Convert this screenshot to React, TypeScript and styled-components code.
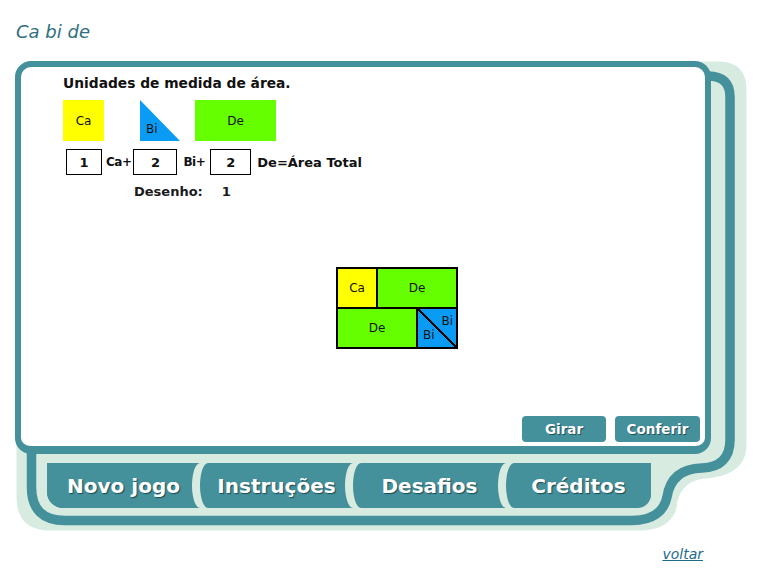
import React from "react";
import styled, { createGlobalStyle } from "styled-components";

const TEAL = "#44909b";
const MINT = "#d7ebe0";
const INK = "#111";

const Global = createGlobalStyle`
  html, body { margin: 0; padding: 0; background: #fff; }
  body { font-family: "DejaVu Sans", Verdana, sans-serif; color: ${INK}; }
`;

const Page = styled.div`
  width: 763px;
  height: 587px;
  padding-top: 21px;
  box-sizing: border-box;
`;

const Title = styled.h1`
  margin: 0 0 0 16px;
  font: italic 400 18px/21px "DejaVu Sans", Verdana, sans-serif;
  color: #2f6f7e;
`;

const Frame = styled.div`
  position: relative;
  isolation: isolate;
  margin: 19px 0 0 15px;
  width: 732px;
  height: 470px;
`;

const Backdrop = styled.svg`
  position: absolute;
  left: 0;
  top: 0;
  z-index: -1;
`;

const Panel = styled.div`
  box-sizing: border-box;
  width: 696px;
  height: 393px;
  background: #fff;
  border: 6px solid ${TEAL};
  border-bottom-width: 8px;
  border-radius: 16px;
  display: flex;
  flex-direction: column;
  align-items: flex-start;
  padding: 9px 5px 4px 42px;
`;

const Heading = styled.div`
  font: 700 13.8px/15px "DejaVu Sans", Verdana, sans-serif;
`;

const PieceRow = styled.div`
  display: flex;
  align-items: flex-start;
  margin-top: 9px;
`;

const Piece = styled.div<{ $w: number; $color: string; $gap?: number }>`
  width: ${(p) => p.$w}px;
  height: 41px;
  margin-right: ${(p) => p.$gap ?? 0}px;
  background: ${(p) => p.$color};
  display: flex;
  align-items: center;
  justify-content: center;
  font: 400 12px/14px "DejaVu Sans", sans-serif;
`;

const Triangle = styled(Piece)`
  clip-path: polygon(0 0, 0 100%, 100% 100%);
  align-items: flex-end;
  justify-content: flex-start;
  padding: 0 0 5px 6px;
  box-sizing: border-box;
`;

const EqRow = styled.div`
  display: flex;
  align-items: center;
  margin-top: 8px;
  padding-left: 3px;
`;

const NumBox = styled.div<{ $w: number }>`
  box-sizing: border-box;
  width: ${(p) => p.$w}px;
  height: 26px;
  border: 1px solid #000;
  display: flex;
  align-items: center;
  justify-content: center;
  font: 700 13px/15px "DejaVu Sans", sans-serif;
`;

const EqLabel = styled.span<{ $l: number; $r: number; $tight?: boolean }>`
  font: 700 ${(p) => (p.$tight ? 12 : 13)}px/15px "DejaVu Sans", sans-serif;
  letter-spacing: ${(p) => (p.$tight ? "-0.5px" : "0")};
  margin: 0 ${(p) => p.$r}px 0 ${(p) => p.$l}px;
`;

const DrawLine = styled.div`
  margin: 9px 0 0 71px;
  font: 700 13px/15px "DejaVu Sans", sans-serif;
  color: #1a1a1a;
`;

const DrawNum = styled.span`
  margin-left: 19px;
`;

const Figure = styled.div`
  display: grid;
  grid-template-columns: repeat(3, 40px);
  grid-template-rows: repeat(2, 40px);
  border: 1px solid #000;
  margin: 68px 0 0 273px;
`;

const Block = styled.div<{ $color: string; $span?: number }>`
  grid-column: span ${(p) => p.$span ?? 1};
  background: ${(p) => p.$color};
  border: 1px solid #000;
  display: flex;
  align-items: center;
  justify-content: center;
  font: 400 12px/14px "DejaVu Sans", sans-serif;
`;

const SplitBlock = styled.div`
  border: 1px solid #000;
  background: linear-gradient(
    to top right,
    #0a9cf5 calc(50% - 0.8px),
    #000 calc(50% - 0.8px),
    #000 calc(50% + 0.8px),
    #0a9cf5 calc(50% + 0.8px)
  );
  display: grid;
  grid-template-columns: 1fr 1fr;
  grid-template-rows: 1fr 1fr;
  font: 400 12px/14px "DejaVu Sans", sans-serif;
`;

const SplitLabel = styled.span<{ $corner: "tr" | "bl" }>`
  grid-column: ${(p) => (p.$corner === "tr" ? 2 : 1)};
  grid-row: ${(p) => (p.$corner === "tr" ? 1 : 2)};
  align-self: ${(p) => (p.$corner === "tr" ? "end" : "start")};
  justify-self: ${(p) => (p.$corner === "tr" ? "end" : "start")};
  margin: ${(p) => (p.$corner === "tr" ? "0 3px 0 0" : "0 0 0 5px")};
`;

const ButtonRow = styled.div`
  margin-top: auto;
  align-self: flex-end;
  display: flex;
  gap: 9px;
`;

const ActionButton = styled.button<{ $w: number }>`
  width: ${(p) => p.$w}px;
  height: 26px;
  border: none;
  border-radius: 4px;
  background: ${TEAL};
  color: #fff;
  font: 700 13.5px/15px "DejaVu Sans", Verdana, sans-serif;
  text-shadow: 1px 1px 0 #21525a;
  padding: 0;
  cursor: pointer;
`;

const TabBar = styled.div`
  margin: 9px 0 0 32px;
  width: 604px;
  height: 45px;
  display: grid;
  grid-template-columns: 153px 153px 153px 145px;
  background: ${TEAL};
  border-radius: 0 0 14px 16px;
  overflow: hidden;
`;

const Tab = styled.div`
  display: flex;
  align-items: center;
  justify-content: center;
  color: #fff;
  font: 700 20px/22px "DejaVu Sans", Verdana, sans-serif;
  text-shadow: 1px 1px 1px #1b4b53;
  background: ${TEAL};
  & + & {
    border-radius: 8px 0 0 8px / 50% 0 0 50%;
    box-shadow: -8px 0 0 ${MINT};
  }
`;

const Footer = styled.div`
  display: flex;
  justify-content: flex-end;
  padding-right: 60px;
  margin-top: 15px;
`;

const BackLink = styled.a`
  font: italic 400 14px/16px "DejaVu Sans", Verdana, sans-serif;
  color: #1d6b8a;
  text-decoration: underline;
`;

export default function App() {
  return (
    <Page>
      <Global />
      <Title>Ca bi de</Title>
      <Frame>
        <Backdrop width="732" height="470" viewBox="15 61 732 470">
          <path
            fill={MINT}
            d="M700 200 L700 61.5 L718 61.5 Q746.5 61.5 746.5 90 L746.5 445 C746.5 468 728 477 705 478.5 C688 480 679 490 677 505 C675 520 662 530.5 640 530.5 L50 530.5 Q16.5 530.5 16.5 497 L16.5 440 L100 440 L100 200 Z"
          />
          <path
            fill={MINT}
            stroke={TEAL}
            strokeWidth="9.5"
            d="M300 300 L31.5 300 L31.5 487 Q31.5 520.5 65 520.5 L632 520.5 C652 520.5 664 512 667 497 C670 478 682 468.5 702 468 C720 467.5 730 458 730 440 L730 97 Q730 76 708 76 L300 76 Z"
          />
        </Backdrop>
        <Panel>
          <Heading>Unidades de medida de área.</Heading>
          <PieceRow>
            <Piece $w={41} $color="#ffff00" $gap={36}>Ca</Piece>
            <Triangle $w={40} $color="#0a9cf5" $gap={15}>Bi</Triangle>
            <Piece $w={81} $color="#66ff00">De</Piece>
          </PieceRow>
          <EqRow>
            <NumBox $w={36}>1</NumBox>
            <EqLabel $l={4} $r={2} $tight>Ca+</EqLabel>
            <NumBox $w={44}>2</NumBox>
            <EqLabel $l={6} $r={5} $tight>Bi+</EqLabel>
            <NumBox $w={41}>2</NumBox>
            <EqLabel $l={6} $r={0}>De=Área Total</EqLabel>
          </EqRow>
          <DrawLine>
            Desenho:<DrawNum>1</DrawNum>
          </DrawLine>
          <Figure>
            <Block $color="#ffff00">Ca</Block>
            <Block $color="#66ff00" $span={2}>De</Block>
            <Block $color="#66ff00" $span={2}>De</Block>
            <SplitBlock>
              <SplitLabel $corner="tr">Bi</SplitLabel>
              <SplitLabel $corner="bl">Bi</SplitLabel>
            </SplitBlock>
          </Figure>
          <ButtonRow>
            <ActionButton $w={84}>Girar</ActionButton>
            <ActionButton $w={85}>Conferir</ActionButton>
          </ButtonRow>
        </Panel>
        <TabBar>
          <Tab>Novo jogo</Tab>
          <Tab>Instruções</Tab>
          <Tab>Desafios</Tab>
          <Tab>Créditos</Tab>
        </TabBar>
      </Frame>
      <Footer>
        <BackLink href="#">voltar</BackLink>
      </Footer>
    </Page>
  );
}
